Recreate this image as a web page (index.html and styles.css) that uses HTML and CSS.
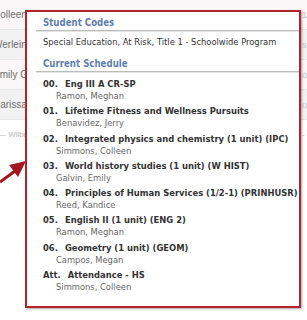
FILE: index.html
```html
<!DOCTYPE html>
<html lang="en">
<head>
  <meta charset="UTF-8" />
  <meta name="viewport" content="width=device-width, initial-scale=1.0"/>
  <title>Student Schedule</title>
  <link rel="stylesheet" href="styles.css">
</head>

<body>
  <!-- roster table behind the popup -->
  <div class="roster">
    <div class="fila"><span class="nombre">Colleen</span><span class="extra">1</span></div>
    <div class="fila"><span class="nombre">Werlein</span><span class="extra">s</span></div>
    <div class="fila"><span class="nombre">Emily Garza</span><span class="extra">o</span></div>
    <div class="fila"><span class="nombre">Carissa</span><span class="extra">o</span></div>
    <div class="fila"><span class="nombre tenue">&mdash; Wilbur</span><span class="extra">-</span></div>
  </div>

  <!-- student popup -->
  <div class="popup">
    <h2 class="seccion">Student Codes</h2>
    <p class="codigos">Special Education, At Risk, Title 1 - Schoolwide Program</p>

    <h2 class="seccion">Current Schedule</h2>
    <ul class="horario">
      <li>
        <div class="curso"><span class="periodo">00.</span>Eng III A CR-SP</div>
        <div class="profe">Ramon, Meghan</div>
      </li>
      <li>
        <div class="curso"><span class="periodo">01.</span>Lifetime Fitness and Wellness Pursuits</div>
        <div class="profe">Benavidez, Jerry</div>
      </li>
      <li>
        <div class="curso"><span class="periodo">02.</span>Integrated physics and chemistry (1 unit) (IPC)</div>
        <div class="profe">Simmons, Colleen</div>
      </li>
      <li>
        <div class="curso"><span class="periodo">03.</span>World history studies (1 unit) (W HIST)</div>
        <div class="profe">Galvin, Emily</div>
      </li>
      <li>
        <div class="curso"><span class="periodo">04.</span>Principles of Human Services (1/2-1) (PRINHUSR)</div>
        <div class="profe">Reed, Kandice</div>
      </li>
      <li>
        <div class="curso"><span class="periodo">05.</span>English II (1 unit) (ENG 2)</div>
        <div class="profe">Ramon, Meghan</div>
      </li>
      <li>
        <div class="curso"><span class="periodo">06.</span>Geometry (1 unit) (GEOM)</div>
        <div class="profe">Campos, Megan</div>
      </li>
      <li>
        <div class="curso"><span class="periodo">Att.</span>Attendance - HS</div>
        <div class="profe">Simmons, Colleen</div>
      </li>
    </ul>
  </div>

  <!-- arrow pointing at the popup -->
  <svg class="flecha" width="30" height="30" viewBox="0 0 30 30">
    <line x1="0" y1="26" x2="15" y2="15" stroke="#a3161f" stroke-width="3"/>
    <polygon points="26,5 9,9 18,21" fill="#a3161f"/>
  </svg>
</body>
</html>
```

FILE: styles.css
```css
body {
  margin: 0;
  background: #fff;
  font-family: "DejaVu Sans Condensed", "DejaVu Sans", sans-serif;
  overflow: hidden;
}

/* tabla de fondo */
.roster {
  width: 307px;
}

.fila {
  display: flex;
  justify-content: space-between;
  align-items: center;
  height: 29px;
  border-bottom: 1px solid #e6e6e6;
  background: #f9f7f7;
  font-family: "Liberation Sans", Arial, sans-serif;
  font-size: 10px;
  color: #6f6f6f;
}

.fila:nth-child(even) {
  background: #f2f2f2;
}

.fila:last-child {
  background: #fff;
  border-bottom: none;
}

.nombre {
  margin-left: -7px;
}

.tenue {
  margin-left: -2px;
  color: #b5b5b5;
  font-size: 8px;
}

.extra {
  width: 5px;
  overflow: hidden;
  color: #c4c4c4;
  font-size: 9px;
}

/* ventana emergente */
.popup {
  position: absolute;
  left: 25px;
  top: 10px;
  width: 276px;
  height: 298px;
  box-sizing: border-box;
  border: 2px solid #b3232c;
  background: #fff;
  padding-top: 4px;
  box-shadow: 1px 1px 2px rgba(0,0,0,0.35);
}

.seccion {
  margin: 0 0 0 9px;
  padding-left: 7px;
  line-height: 14px;
  font-size: 9.6px;
  font-weight: bold;
  color: #5f7fae;
  border-bottom: 1px solid #bcbcbc;
  box-shadow: 0 1px 0 #e4e4e4;
}

.codigos {
  margin: 4px 0 8px 16px;
  line-height: 14px;
  font-size: 9.3px;
  color: #333;
}

.horario {
  list-style: none;
  margin: 5px 0 0 16px;
  padding: 0;
}

.horario li {
  margin-bottom: 2px;
}

.curso {
  line-height: 13px;
  font-size: 9.35px;
  font-weight: bold;
  color: #333;
  white-space: nowrap;
}

.periodo {
  margin-right: 7px;
}

.profe {
  padding-left: 13px;
  line-height: 12.3px;
  font-size: 9.3px;
  color: #666;
}

.flecha {
  position: absolute;
  left: 0;
  top: 156px;
}
```
